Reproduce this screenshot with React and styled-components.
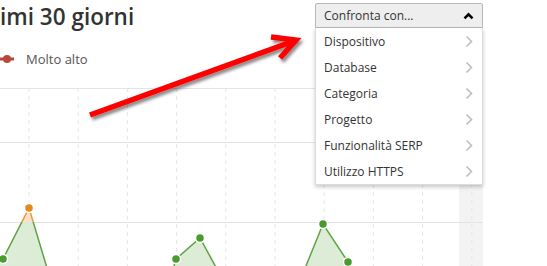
import React from "react"
import styled, { createGlobalStyle } from "styled-components"

const GlobalStyle = createGlobalStyle`
  html, body {
    margin: 0;
    padding: 0;
    background: #ffffff;
    overflow: hidden;
  }
  body {
    font-family: "Open Sans", "Noto Sans", sans-serif;
    color: #333333;
  }
`

const OPTIONS = ["Dispositivo", "Database", "Categoria", "Progetto", "Funzionalità SERP", "Utilizzo HTTPS"]

// chart coords, y measured from the top gridline
const GRID_X = Array.from({ length: 10 }, (_, i) => 29 + i * 49.2)
const THRESHOLD = 134
const SERIES = [
    { line: [[-20, 200], [3, 171], [29, 120], [53, 200]], dots: [[3, 171], [29, 120]] },
    { line: [[168, 200], [176, 171], [200, 150], [230, 205]], dots: [[176, 171], [200, 150]] },
    { line: [[297, 200], [323, 136], [348, 174], [365, 200]], dots: [[323, 136], [348, 174]] },
]

export default function App() {
    return (<>
        <GlobalStyle />
        <Page>
            <Header>
                <Title>imi 30 giorni</Title>
                <Dropdown>
                    <DropdownButton>
                        <span>Confronta con...</span>
                        <ChevronUp />
                    </DropdownButton>
                    <Menu>
                        {OPTIONS.map(item => (
                            <MenuItem key={item}>
                                <span>{item}</span>
                                <ChevronRight />
                            </MenuItem>
                        ))}
                    </Menu>
                </Dropdown>
            </Header>
            <Legend>
                <LegendMarker />
                <span>Molto alto</span>
            </Legend>
            <Chart />
            <Arrow />
        </Page>
    </>)
}

function ChevronUp() {
    return (
        <svg width="11" height="8" viewBox="0 0 11 8">
            <path d="M1.5 6.3 L5.5 2.3 L9.5 6.3" fill="none" stroke="#000" strokeWidth="2.6" />
        </svg>
    )
}

function ChevronRight() {
    return (
        <svg width="8" height="13" viewBox="0 0 8 13">
            <path d="M1.5 1.5 L6.5 6.5 L1.5 11.5" fill="none" stroke="#bdbdbd" strokeWidth="1.6" />
        </svg>
    )
}

function LegendMarker() {
    return (
        <svg width="14" height="10" viewBox="0 0 14 10">
            <line x1="0" y1="5" x2="14" y2="5" stroke="#b9473a" strokeWidth="3" />
            <circle cx="7" cy="5" r="4" fill="#b9473a" />
        </svg>
    )
}

function Chart() {
    const toPts = arr => arr.map(p => p.join(",")).join(" ")
    const areas = SERIES.map(s => toPts([...s.line, [s.line[s.line.length - 1][0], 200], [s.line[0][0], 200]]))
    return (
        <ChartSvg width="547" height="178" viewBox="0 0 547 178">
            <defs>
                <clipPath id="below"><rect x="0" y={THRESHOLD} width="547" height="100" /></clipPath>
                <clipPath id="above"><rect x="0" y="0" width="547" height={THRESHOLD} /></clipPath>
            </defs>
            <rect x="459" y="0" width="24" height="178" fill="#f3f3f3" />
            {GRID_X.map(x => (
                <line key={x} x1={x} y1="0" x2={x} y2="178" stroke="#e6e6e6" strokeWidth="1" strokeDasharray="4 4" />
            ))}
            {[0.5, 54.5, 134.5].map(y => (
                <line key={y} x1="0" y1={y} x2="483" y2={y} stroke="#e3e3e3" strokeWidth="1" />
            ))}
            <g clipPath="url(#below)">
                {areas.map((a, i) => <polygon key={i} points={a} fill="#d9ead3" opacity="0.9" />)}
                {SERIES.map((s, i) => <polyline key={i} points={toPts(s.line)} fill="none" stroke="#5ea344" strokeWidth="1.5" />)}
            </g>
            <g clipPath="url(#above)">
                {areas.map((a, i) => <polygon key={i} points={a} fill="#fbe1cb" />)}
                {SERIES.map((s, i) => <polyline key={i} points={toPts(s.line)} fill="none" stroke="#e59a3c" strokeWidth="1.5" />)}
            </g>
            {SERIES.flatMap(s => s.dots).map(([x, y]) => (
                <circle key={x} cx={x} cy={y} r="4.5" fill={y < THRESHOLD ? "#e28a1d" : "#4c9a2f"} stroke="#fff" strokeWidth="1.5" />
            ))}
        </ChartSvg>
    )
}

function Arrow() {
    return (
        <ArrowSvg width="547" height="266" viewBox="0 0 547 266">
            <defs>
                <filter id="shade" x="-20%" y="-20%" width="140%" height="140%">
                    <feDropShadow dx="2" dy="3" stdDeviation="1.6" floodColor="#000" floodOpacity="0.45" />
                </filter>
            </defs>
            <g filter="url(#shade)" stroke="#ff0000" strokeWidth="5.5" fill="none" strokeLinecap="butt">
                <line x1="90" y1="115" x2="294" y2="41" />
                <path d="M271 37 L296 40 L280 58" strokeLinejoin="miter" />
            </g>
        </ArrowSvg>
    )
}

const Page = styled.div`
    position: relative;
    width: 547px;
    height: 266px;
    overflow: hidden;
    display: flex;
    flex-direction: column;
`

const Header = styled.div`
    display: flex;
    justify-content: space-between;
    align-items: flex-start;
    height: 30px;
    padding-right: 64px;
    position: relative;
    z-index: 2;
`

const Title = styled.h1`
    margin: 2px 0 0 0;
    font-size: 22.5px;
    line-height: 30px;
    font-weight: 600;
    color: #333333;
    letter-spacing: 0;
`

const Dropdown = styled.div`
    position: relative;
    width: 168px;
    margin-top: 3px;
    font-size: 12px;
`

const DropdownButton = styled.div`
    display: flex;
    align-items: center;
    justify-content: space-between;
    height: 23px;
    padding: 0 8px 0 8px;
    background: #eeeeee;
    border: 1px solid #b8b8b8;
    border-radius: 2px 2px 0 0;
    color: #333333;
`

const Menu = styled.div`
    position: absolute;
    top: 100%;
    left: 0;
    right: 0;
    background: #ffffff;
    border: 1px solid #dcdcdc;
    border-top: none;
    box-shadow: 0 2px 4px rgba(0, 0, 0, 0.22);
`

const MenuItem = styled.div`
    display: flex;
    align-items: center;
    justify-content: space-between;
    height: 26px;
    padding: 0 9px 0 8px;
    color: #333333;
`

const Legend = styled.div`
    display: flex;
    align-items: center;
    gap: 12px;
    height: 58px;
    font-size: 13px;
    color: #555555;
`

const ChartSvg = styled.svg`
    display: block;
    flex: none;
`

const ArrowSvg = styled.svg`
    position: absolute;
    top: 0;
    left: 0;
    z-index: 3;
    pointer-events: none;
`
